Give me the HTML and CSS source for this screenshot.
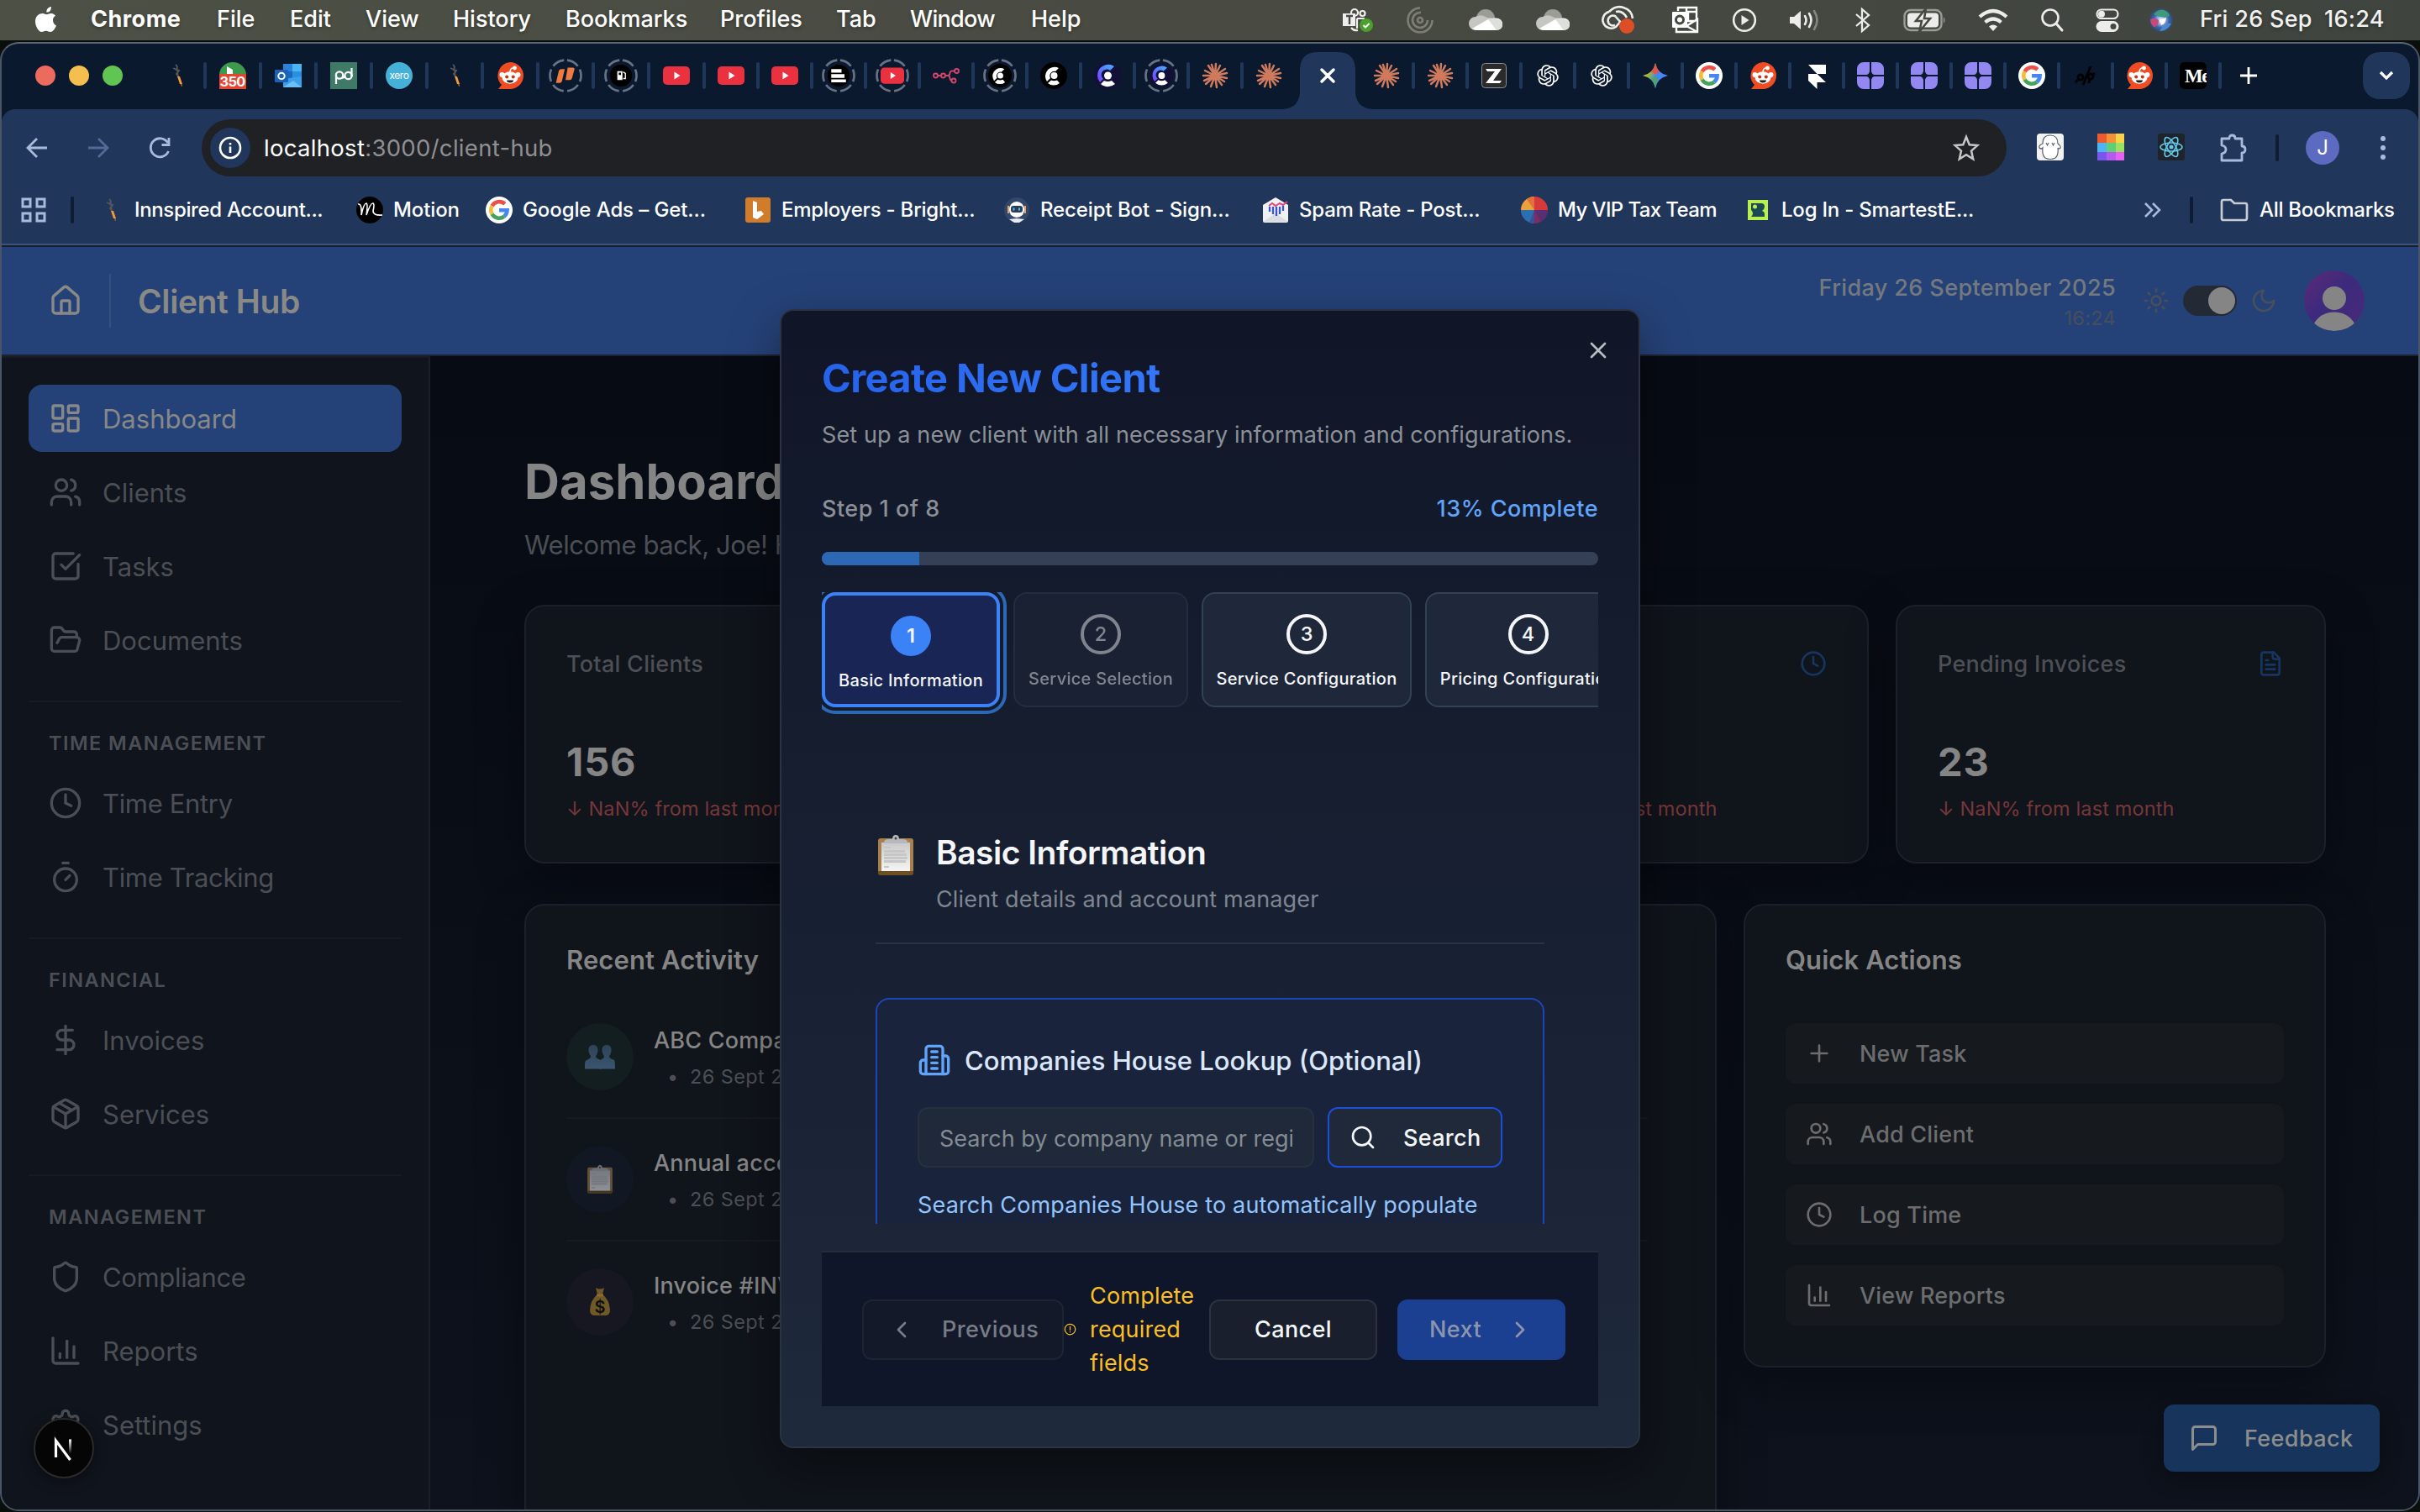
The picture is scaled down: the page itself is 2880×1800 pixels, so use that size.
FILE: index.html
```html
<!DOCTYPE html>
<html lang="en">
<head>
<meta charset="utf-8">
<title>Client Hub</title>
<link rel="stylesheet" href="styles.css">
</head>
<body>
<svg class="defs" width="0" height="0">
<defs>
<linearGradient id="gemini-g" x1="0" y1="0.2" x2="1" y2="0.7"><stop offset="0" stop-color="#f6c042"/><stop offset=".35" stop-color="#8ab04e"/><stop offset=".55" stop-color="#4285f4"/><stop offset="1" stop-color="#4a8cf7"/></linearGradient>
<linearGradient id="clerk-g" x1="0" y1="1" x2="1" y2="0"><stop offset="0" stop-color="#7a3cff"/><stop offset="1" stop-color="#3fb6ff"/></linearGradient>
<linearGradient id="paper-g" x1="0" y1="0" x2="0" y2="1"><stop offset="0" stop-color="#c9c9cb"/><stop offset="1" stop-color="#f5f5f5"/></linearGradient>
<linearGradient id="bust-g" x1="0" y1="0" x2="0" y2="1"><stop offset="0" stop-color="#2e4357"/><stop offset="1" stop-color="#3b5570"/></linearGradient>
<linearGradient id="next-g" x1="0" y1="0" x2="0" y2="1"><stop offset="0" stop-color="#fff"/><stop offset="1" stop-color="#fff" stop-opacity="0"/></linearGradient>
<radialGradient id="siri-g"><stop offset="0" stop-color="#fff"/><stop offset=".3" stop-color="#9fb8e8"/><stop offset=".65" stop-color="#3b62b0"/><stop offset="1" stop-color="#314a66"/></radialGradient>
</defs>

<symbol id="home" viewBox="0 0 24 24"><path d="M15 21v-8a1 1 0 0 0-1-1h-4a1 1 0 0 0-1 1v8"/><path d="M3 10a2 2 0 0 1 .709-1.528l7-5.999a2 2 0 0 1 2.582 0l7 5.999A2 2 0 0 1 21 10v9a2 2 0 0 1-2 2H5a2 2 0 0 1-2-2z"/></symbol>
<symbol id="dash" viewBox="0 0 24 24"><rect x="3" y="3" width="7" height="9" rx="1"/><rect x="14" y="3" width="7" height="5" rx="1"/><rect x="14" y="12" width="7" height="9" rx="1"/><rect x="3" y="16" width="7" height="5" rx="1"/></symbol>
<symbol id="users" viewBox="0 0 24 24"><path d="M16 21v-2a4 4 0 0 0-4-4H6a4 4 0 0 0-4 4v2"/><circle cx="9" cy="7" r="4"/><path d="M22 21v-2a4 4 0 0 0-3-3.87"/><path d="M16 3.13a4 4 0 0 1 0 7.75"/></symbol>
<symbol id="check" viewBox="0 0 24 24"><path d="M21 10.5V19a2 2 0 0 1-2 2H5a2 2 0 0 1-2-2V5a2 2 0 0 1 2-2h12.5"/><path d="m9 11 3 3L22 4"/></symbol>
<symbol id="folder-open" viewBox="0 0 24 24"><path d="m6 14 1.5-2.9A2 2 0 0 1 9.24 10H20a2 2 0 0 1 1.94 2.5l-1.54 6a2 2 0 0 1-1.95 1.5H4a2 2 0 0 1-2-2V5a2 2 0 0 1 2-2h3.9a2 2 0 0 1 1.69.9l.81 1.2a2 2 0 0 0 1.67.9H18a2 2 0 0 1 2 2v2"/></symbol>
<symbol id="clock" viewBox="0 0 24 24"><circle cx="12" cy="12" r="10"/><path d="M12 6v6l4 2"/></symbol>
<symbol id="timer" viewBox="0 0 24 24"><path d="M10 2h4"/><path d="m12 14 3-3"/><circle cx="12" cy="14" r="8"/></symbol>
<symbol id="dollar" viewBox="0 0 24 24"><path d="M12 2v20"/><path d="M17 5H9.5a3.5 3.5 0 0 0 0 7h5a3.5 3.5 0 0 1 0 7H6"/></symbol>
<symbol id="package" viewBox="0 0 24 24"><path d="M11 21.73a2 2 0 0 0 2 0l7-4A2 2 0 0 0 21 16V8a2 2 0 0 0-1-1.73l-7-4a2 2 0 0 0-2 0l-7 4A2 2 0 0 0 3 8v8a2 2 0 0 0 1 1.73z"/><path d="M12 22V12"/><path d="m3.3 7 8.7 5 8.7-5"/><path d="m7.5 4.27 9 5.15"/></symbol>
<symbol id="shield" viewBox="0 0 24 24"><path d="M20 13c0 5-3.5 7.5-7.66 8.95a1 1 0 0 1-.67-.01C7.5 20.5 4 18 4 13V6a1 1 0 0 1 1-1c2 0 4.5-1.2 6.24-2.72a1.17 1.17 0 0 1 1.52 0C14.51 3.81 17 5 19 5a1 1 0 0 1 1 1z"/></symbol>
<symbol id="chart" viewBox="0 0 24 24"><path d="M3 3v16a2 2 0 0 0 2 2h16"/><path d="M18 17V9"/><path d="M13 17V5"/><path d="M8 17v-3"/></symbol>
<symbol id="gear" viewBox="0 0 24 24"><path d="M12.22 2h-.44a2 2 0 0 0-2 2v.18a2 2 0 0 1-1 1.73l-.43.25a2 2 0 0 1-2 0l-.15-.08a2 2 0 0 0-2.73.73l-.22.38a2 2 0 0 0 .73 2.73l.15.1a2 2 0 0 1 1 1.72v.51a2 2 0 0 1-1 1.74l-.15.09a2 2 0 0 0-.73 2.73l.22.38a2 2 0 0 0 2.73.73l.15-.08a2 2 0 0 1 2 0l.43.25a2 2 0 0 1 1 1.73V20a2 2 0 0 0 2 2h.44a2 2 0 0 0 2-2v-.18a2 2 0 0 1 1-1.73l.43-.25a2 2 0 0 1 2 0l.15.08a2 2 0 0 0 2.73-.73l.22-.39a2 2 0 0 0-.73-2.73l-.15-.08a2 2 0 0 1-1-1.74v-.5a2 2 0 0 1 1-1.74l.15-.09a2 2 0 0 0 .73-2.73l-.22-.38a2 2 0 0 0-2.73-.73l-.15.08a2 2 0 0 1-2 0l-.43-.25a2 2 0 0 1-1-1.73V4a2 2 0 0 0-2-2z"/><circle cx="12" cy="12" r="3"/></symbol>
<symbol id="file" viewBox="0 0 24 24"><path d="M15 2H6a2 2 0 0 0-2 2v16a2 2 0 0 0 2 2h12a2 2 0 0 0 2-2V7Z"/><path d="M14 2v4a2 2 0 0 0 2 2h4"/><path d="M10 9H8M16 13H8M16 17H8"/></symbol>
<symbol id="message" viewBox="0 0 24 24"><path d="M21 15a2 2 0 0 1-2 2H7l-4 4V5a2 2 0 0 1 2-2h14a2 2 0 0 1 2 2z"/></symbol>
<symbol id="building" viewBox="0 0 24 24"><path d="M6 22V4a2 2 0 0 1 2-2h8a2 2 0 0 1 2 2v18Z"/><path d="M6 12H4a2 2 0 0 0-2 2v6a2 2 0 0 0 2 2h2"/><path d="M18 9h2a2 2 0 0 1 2 2v9a2 2 0 0 1-2 2h-2"/><path d="M10 6h4M10 10h4M10 14h4M10 18h4"/></symbol>
<symbol id="search" viewBox="0 0 24 24"><circle cx="11" cy="11" r="8"/><path d="m21 21-4.3-4.3"/></symbol>
<symbol id="sun" viewBox="0 0 24 24"><circle cx="12" cy="12" r="4"/><path d="M12 2v2M12 20v2M4.93 4.93l1.41 1.41M17.66 17.66l1.41 1.41M2 12h2M20 12h2M6.34 17.66l-1.41 1.41M19.07 4.93l-1.41 1.41"/></symbol>
<symbol id="moon" viewBox="0 0 24 24"><path d="M12 3a6 6 0 0 0 9 9 9 9 0 1 1-9-9Z"/></symbol>
<symbol id="plus" viewBox="0 0 24 24"><path d="M5 12h14M12 5v14"/></symbol>
<symbol id="x" viewBox="0 0 24 24"><path d="M18 6 6 18M6 6l12 12"/></symbol>
<symbol id="left" viewBox="0 0 24 24"><path d="m15 18-6-6 6-6"/></symbol>
<symbol id="right" viewBox="0 0 24 24"><path d="m9 18 6-6-6-6"/></symbol>
<symbol id="alert" viewBox="0 0 24 24"><circle cx="12" cy="12" r="10"/><path d="M12 7v6M12 16.5v.5"/></symbol>

<symbol id="feather" viewBox="0 0 32 32"><path d="M14 3q3 2 1 6l3 1-3 4 3 4" fill="none" stroke="#54565a" stroke-width="2"/><path d="m16 9 1 8M11 7l4 2" stroke="#54565a" stroke-width="1.500"/><path d="M16 17h3l3 9h-3z" fill="#f39a3b"/><path d="m19.500 26 2.500 0 0 3-1 0z" fill="#8a5a2c"/></symbol>
<symbol id="outlook" viewBox="0 0 32 32"><path d="M10 2h22v24H10z" fill="#1769bd"/><path d="M21 2h11v9H21z" fill="#4ab5f0"/><path d="M10 2h11v9H10z" fill="#2a83d8"/><path d="M21 11h11v8H21z" fill="#2b8fe0"/><path d="m10 20 22-3v13H10z" fill="#3c9fe8"/><path d="m10 30 12-8 10 8z" fill="#6bc1f7"/><rect y="9" width="16" height="15" rx="1" fill="#1a63b8"/><circle cx="8" cy="16.500" r="3.700" fill="none" stroke="#fff" stroke-width="2"/></symbol>
<symbol id="pd" viewBox="0 0 32 32"><path d="M0 0h32v32H0z" fill="#3f7a66"/><g fill="none" stroke="#fff" stroke-width="2.200"><path d="M7 26V15"/><circle cx="11" cy="15.500" r="4.200"/><path d="M14 19q3-1 4-3"/><circle cx="21.500" cy="16" r="4.200"/><path d="M25.500 17V7"/></g></symbol>
<symbol id="reddit" viewBox="0 0 32 32"><path d="M16 0a16 16 0 1 1 0 32H2l4-5A16 16 0 0 1 16 0z" fill="#ee4c23"/><ellipse cx="16" cy="18.500" rx="9.500" ry="7.200" fill="#fff"/><circle cx="6.500" cy="15" r="3" fill="#fff"/><circle cx="25.500" cy="15" r="3" fill="#fff"/><circle cx="21.500" cy="7" r="2.400" fill="#fff"/><path d="M16 12c0-4 1.500-5 4-5" fill="none" stroke="#fff" stroke-width="1.500"/><circle cx="12.200" cy="17.500" r="2" fill="#c73410"/><circle cx="19.800" cy="17.500" r="2" fill="#c73410"/><path d="M12 21.500h8a4 3 0 0 1-8 0z" fill="#222"/></symbol>
<symbol id="yt" viewBox="0 0 32 32"><rect y="5" width="32" height="22" rx="5" fill="#ea3140"/><path d="M13.500 11.500v9l7-4.500z" fill="#fff"/></symbol>
<symbol id="dots" viewBox="0 0 40 40"><circle cx="20" cy="20" r="18.500" fill="none" stroke="#677384" stroke-width="2.700" stroke-dasharray="14.900 4.470" transform="rotate(-84 20 20)"/></symbol>
<symbol id="motion-o" viewBox="0 0 32 32"><g fill="#ef7b3f"><path d="M7 9q1-2 3-2h5l-4 17q-1 2-3 2H3z"/><path d="M19 5h7q3 0 2 3l-3 11q-1 3-3 3h-6z"/></g></symbol>
<symbol id="fuel" viewBox="0 0 32 32"><circle cx="16" cy="16" r="15" fill="#000"/><path d="M11 10h7v12h-7z" fill="#fff"/><path d="M13 12h3v3h-3z" fill="#000"/><path d="m19 11 3 2v7h-3" fill="none" stroke="#fff" stroke-width="1.500"/></symbol>
<symbol id="lines" viewBox="0 0 32 32"><circle cx="16" cy="16" r="15" fill="#000"/><path d="M6 7h14v5H6zM6 14h18v5H6zM6 21h20v4H6z" fill="#fff"/></symbol>
<symbol id="n8n" viewBox="0 0 32 32"><g fill="none" stroke="#d0476b" stroke-width="1.900"><circle cx="3.500" cy="16" r="2.500"/><circle cx="12.500" cy="16" r="2.500"/><circle cx="28.500" cy="10.500" r="2.500"/><circle cx="25" cy="22" r="2.500"/><path d="M6 16h4M15 16h3q2 0 2.500-3t3-2.500H26M18 16q2 0 2.500 3t2 3"/></g></symbol>
<symbol id="clerk" viewBox="0 0 32 32"><circle cx="16" cy="16" r="16" fill="#000"/><path d="M22 7a11 11 0 0 0-16 9 11 11 0 0 0 2 7l4-4a5.500 5.500 0 0 1 6-8z" fill="#fff"/><circle cx="16.500" cy="16" r="4" fill="#fff"/><path d="m9 25 4-3.500q3 1.500 7 0l3 3.500a11 11 0 0 1-14 0z" fill="#fff"/></symbol>
<symbol id="clerk2" viewBox="0 0 32 32"><circle cx="16" cy="16" r="16" fill="#131038"/><path d="M24 5a13 13 0 0 0-20 11 13 13 0 0 0 3 8l4-4a6 6 0 0 1 8-10z" fill="url(#clerk-g)"/><circle cx="16.500" cy="16" r="4.500" fill="#fff"/><path d="m8 26 4-4q4 2 9 0l4 4a13 13 0 0 1-17 0z" fill="#fff"/></symbol>
<symbol id="claude" viewBox="0 0 32 32"><g stroke="#d07a5d" stroke-width="2.500" stroke-linecap="round"><path d="M16 16 17 2M16 16l6-12M16 16 28 8M16 16l14-3M16 16l14 3M16 16l11 7M16 16l8 11M16 16l2 14M16 16l-5 13M16 16 5 26M16 16 3 22M16 16 2 16M16 16 4 10M16 16 8 4M16 16 12 3"/></g></symbol>
<symbol id="zed" viewBox="0 0 32 32"><rect x="1.500" y="1.500" width="29" height="29" rx="4" fill="#2b2b2b" stroke="#8d8f92"/><path d="M6 8h19l-10 14h10l-2 3H6L17 11H8z" fill="#fff"/></symbol>
<symbol id="gpt" viewBox="-3 -3 30 30"><path fill="#fff" d="M22.2819 9.8211a5.9847 5.9847 0 0 0-.5157-4.9108 6.0462 6.0462 0 0 0-6.5098-2.9A6.0651 6.0651 0 0 0 4.9807 4.1818a5.9847 5.9847 0 0 0-3.9977 2.9 6.0462 6.0462 0 0 0 .7427 7.0966 5.98 5.98 0 0 0 .511 4.9107 6.051 6.051 0 0 0 6.5146 2.9001A5.9847 5.9847 0 0 0 13.2599 24a6.0557 6.0557 0 0 0 5.7718-4.2058 5.9894 5.9894 0 0 0 3.9977-2.9001 6.0557 6.0557 0 0 0-.7475-7.0729zm-9.022 12.6081a4.4755 4.4755 0 0 1-2.8764-1.0408l.1419-.0804 4.7783-2.7582a.7948.7948 0 0 0 .3927-.6813v-6.7369l2.02 1.1686a.071.071 0 0 1 .038.0615v5.5826a4.504 4.504 0 0 1-4.4945 4.4944zm-9.6607-4.1254a4.4708 4.4708 0 0 1-.5346-3.0137l.142.0852 4.783 2.7582a.7712.7712 0 0 0 .7806 0l5.8428-3.3685v2.3324a.0804.0804 0 0 1-.0332.0615L9.74 19.9502a4.4992 4.4992 0 0 1-6.1408-1.6464zM2.3408 7.8956a4.485 4.485 0 0 1 2.3655-1.9728V11.6a.7664.7664 0 0 0 .3879.6765l5.8144 3.3543-2.0201 1.1685a.0757.0757 0 0 1-.071 0l-4.8303-2.7865A4.504 4.504 0 0 1 2.3408 7.872zm16.5963 3.8558L13.1038 8.364 15.1192 7.2a.0757.0757 0 0 1 .071 0l4.8303 2.7913a4.4944 4.4944 0 0 1-.6765 8.1042v-5.6772a.79.79 0 0 0-.407-.667zm2.0107-3.0231l-.142-.0852-4.7735-2.7818a.7759.7759 0 0 0-.7854 0L9.409 9.2297V6.8974a.0662.0662 0 0 1 .0284-.0615l4.8303-2.7866a4.4992 4.4992 0 0 1 6.6802 4.66zM8.3065 12.863l-2.02-1.1638a.0804.0804 0 0 1-.038-.0567V6.0742a4.4992 4.4992 0 0 1 7.3757-3.4537l-.142.0805L8.704 5.459a.7948.7948 0 0 0-.3927.6813zm1.0976-2.3654l2.602-1.4998 2.6069 1.4998v2.9994l-2.5974 1.4997-2.6067-1.4997Z"/></symbol>
<symbol id="gemini" viewBox="0 0 32 32"><path d="M16 1q2.500 12.500 15 15-12.500 2.500-15 15-2.500-12.500-15-15 12.500-2.500 15-15z" fill="url(#gemini-g)"/><path d="M16 1q1.500 7 5 10.500l-5 3-5-3q3.500-3.500 5-10.500z" fill="#e5544a"/><path d="M11 20.500 16 17l3 4q-2 4-3 10-1.500-7-5-10.500z" fill="#4aa567"/></symbol>
<symbol id="google" viewBox="0 0 32 32"><circle cx="16" cy="16" r="16" fill="#fff"/><g fill="none" stroke-width="4.600"><path d="M22.800 8.800A9.700 9.700 0 0 0 7.600 11.200" stroke="#ea5148"/><path d="M7.600 11.200a9.700 9.700 0 0 0 0 9.600" stroke="#f5bd35"/><path d="M7.600 20.800a9.700 9.700 0 0 0 14.400 2.800" stroke="#43a35a"/><path d="M22 23.600a9.700 9.700 0 0 0 3.600-7.400H16" stroke="#4687ee"/></g></symbol>
<symbol id="framer" viewBox="0 0 32 32"><path d="M6 3h21v11H16.500zM6 14h10.500L27 24H16.500v8L6 22z" fill="#fff"/></symbol>
<symbol id="quad" viewBox="0 0 32 32"><path d="M8 0h7v11q-1 4-4 4H0V8a8 8 0 0 1 8-8zM17 0h7a8 8 0 0 1 8 8v7H21q-3 0-4-4zM0 17h11q3 0 4 4v11H8a8 8 0 0 1-8-8zM21 17h11v7a8 8 0 0 1-8 8h-7V21q1-4 4-4z" fill="#9387f2"/></symbol>
<symbol id="graph" viewBox="0 0 32 32"><g fill="none" stroke="#020305" stroke-width="3"><circle cx="10" cy="18" r="3"/><circle cx="22" cy="17" r="3"/><path d="m4 24 4-4M13 27 22 5M21 20l-1 5M24 15l3-2"/></g></symbol>
<symbol id="ghost" viewBox="0 0 32 32"><rect width="32" height="32" rx="4" fill="#f2f2f3"/><path d="M7 12q0-10 9-10t9 10q4 3 3 5-2 2-3 0 1 9-3 12-6 3-12 0-4-3-3-12-2 2-4 0-1-3 4-5z" fill="#fff" stroke="#5b5f6b" stroke-width="1.200"/><path d="m11 11 1.500 3 1.500-3M18 11l1.500 3 1.500-3" fill="none" stroke="#5b5f6b" stroke-width="1.100"/></symbol>
<symbol id="mosaic" viewBox="0 0 32 32"><path d="M0 0h11v11H0z" fill="#ee5a30"/><path d="M11 0h11v11H11z" fill="#f39335"/><path d="M22 0h10v11H22z" fill="#f8d548"/><path d="M0 11h11v11H0z" fill="#4db6f2"/><path d="M11 11h11v11H11z" fill="#5fce78"/><path d="M22 11h10v11H22z" fill="#9ae063"/><path d="M0 22h11v10H0z" fill="#7a55ee"/><path d="M11 22h11v10H11z" fill="#b45af0"/><path d="M22 22h10v10H22z" fill="#e860f0"/></symbol>
<symbol id="react" viewBox="0 0 32 32"><rect width="32" height="32" rx="3" fill="#20232a"/><g fill="none" stroke="#61c9ea" stroke-width="1.600"><ellipse cx="16" cy="16" rx="13" ry="5"/><ellipse cx="16" cy="16" rx="13" ry="5" transform="rotate(60 16 16)"/><ellipse cx="16" cy="16" rx="13" ry="5" transform="rotate(120 16 16)"/></g><circle cx="16" cy="16" r="2.500" fill="#61c9ea"/></symbol>
<symbol id="clip" viewBox="0 0 48 48"><path d="M3 7q0-3 3-3h36q3 0 3 3v38q0 2-3 2H6q-3 0-3-2z" fill="#a8804a"/><path d="M3 43h42v2q0 3-3 3H6q-3 0-3-3z" fill="#6f4f22"/><path d="M7 9h34v34H7z" fill="url(#paper-g)"/><path d="M10 14h8v2h-8zM10 18h25v3H10zM10 22h27v3H10zM10 26h28v3H10zM10 30h26v3H10zM10 37h6v2h-6z" fill="#c7c7c7"/><path d="M10 9q0-4 6-4h4q0-5 4-5t4 5h4q6 0 6 4v1H10z" fill="#b5b9bf"/><circle cx="24" cy="4" r="1.500" fill="#444"/></symbol>
<symbol id="busts" viewBox="0 0 36 30"><path d="M10 1c4 0 6 3 5.500 7-.3 3-1.500 5-2.500 6 0 2 1 3 5 4.500 2 1 2.500 3 2 11H0c0-7 0-9 2-10.500 4-1.500 5-3 5-5-1-1-2.300-3-2.500-6C4 4 6 1 10 1z" fill="url(#bust-g)"/><path d="M26 1c4 0 6 3 5.500 7-.3 3-1.500 5-2.500 6 0 2 1 3 5 4.500 2 1 2 3 2 11H17c0-7 0-9 1-10.500 4-1.500 5-3 5-5-1-1-2.300-3-2.500-6C20 4 22 1 26 1z" fill="url(#bust-g)"/></symbol>
<symbol id="cloud" viewBox="0 0 40 28"><circle cx="20" cy="12" r="11" fill="#9b9c98"/><path d="M8 26a8 8 0 0 1 0-16q6-4 14 1l10 1a8 8 0 0 1 0 14z" fill="#c6c7c3"/><path d="m4 24 19-11q17-5 17 6 0 7-8 7H8z" fill="#fff"/><path d="m23 13 10 13q7-1 7-7-1-9-17-6z" fill="#dedfdd"/></symbol>
</svg>

<div class="desktop">
<header class="menubar">
  <nav class="menus">
    <svg width="27" height="32" viewBox="0 0 27 32"><path fill="#fff" d="M22 17c0-3.500 2.800-5 3-5.200-1.700-2.400-4.200-2.800-5.100-2.800-2.200-.2-4.300 1.300-5.400 1.300S11.700 9 9.900 9C4 9 1 13.600 1 18.500 1 24 4.800 31 8.400 31c1.900 0 3-1.300 5.300-1.300 2.300 0 3.200 1.300 5.300 1.300 3.500 0 6.500-6 7-7.600C24 22.500 22 20.500 22 17zM18.500 6c1-1.200 1.700-3.200 1.500-5-2.500.1-5.700 2.200-5.700 6.500 1.700.2 3.300-.4 4.200-1.500z"/></svg>
    <b>Chrome</b><span>File</span><span>Edit</span><span>View</span><span>History</span><span>Bookmarks</span><span>Profiles</span><span>Tab</span><span class="tight">Window</span><span>Help</span>
  </nav>
  <div class="status">
    <svg width="38" height="30" viewBox="0 0 38 30"><g fill="none" stroke="#eeeeec" stroke-width="2.200"><circle cx="15" cy="6" r="4"/><circle cx="24.500" cy="7" r="3"/><path d="M18 13h9M11 24q3 4 8 3M18 13v12"/></g><path d="M1 7h15v15H1z" fill="#eeeeec"/><path d="M5 10h8M9 10v10" stroke="#4a4c44" stroke-width="2.400"/><circle cx="29" cy="21" r="8" fill="#4aa02c"/><path d="m25.500 21 2.500 2.500 4.500-4.500" stroke="#fff" stroke-width="2" fill="none"/></svg>
    <svg width="32" height="32" viewBox="0 0 32 32"><g fill="none" stroke="#7c7e77" stroke-width="2.600"><path d="M16 1.500a14.500 14.500 0 1 0 14.500 14.500"/><path d="M17 7a9 9 0 1 0 8 9"/><circle cx="16" cy="16" r="3"/></g></svg>
    <svg width="40" height="28"><use href="#cloud"/></svg>
    <svg width="40" height="28"><use href="#cloud"/></svg>
    <svg width="42" height="34" viewBox="0 0 42 34"><g fill="none" stroke="#eeeeec" stroke-width="2.600"><path d="M10 7Q18-1 27 2q10 3 11 13M10 7a10 10 0 1 0 8 18l6-7"/><path d="M17 23a6 6 0 1 1 0-11l8 9"/><path d="M18 7q8-2 13 7"/></g><circle cx="31" cy="24" r="9" fill="#dd4e27"/></svg>
    <svg width="34" height="34" viewBox="0 0 34 34"><path d="M8 6V2h22v14M6 25v6h25V16l-13 8 13 7M18 2v5h12M20 8v10h9" fill="none" stroke="#fff" stroke-width="2.400"/><rect x="1" y="7" width="18" height="19" rx="1" fill="#fff"/><circle cx="10" cy="16.500" r="4.500" fill="none" stroke="#45473f" stroke-width="3"/></svg>
    <svg width="30" height="30" viewBox="0 0 30 30"><circle cx="15" cy="15" r="12.800" fill="none" stroke="#ecedeb" stroke-width="2.600"/><path d="M11.500 9v12l9-6z" fill="#ecedeb"/></svg>
    <svg width="40" height="30" viewBox="0 0 40 30"><path d="M2 11h5l8-7v22l-8-7H2z" fill="#ecedeb"/><g fill="none" stroke="#ecedeb" stroke-width="2.600" stroke-linecap="round"><path d="M20 10q3 5 0 10M25 7q5 8 0 16"/><path d="M31 4q7 11 0 22" stroke="#85877f"/></g></svg>
    <svg width="20" height="30" viewBox="0 0 20 30"><path d="m2 8 15 13-8 7V2l8 7L2 22" fill="none" stroke="#ecedeb" stroke-width="2.300"/></svg>
    <svg width="52" height="28" viewBox="0 0 52 28"><rect x="1.500" y="2" width="44" height="24" rx="7" fill="none" stroke="#9a9c96" stroke-width="2.400"/><rect x="5" y="5.500" width="37" height="17" rx="4" fill="#ecedeb"/><path d="M48 10q3 4 0 8z" fill="#9a9c96"/><path d="M27 0 15 15h7l-3 13 13-16h-7z" fill="#ecedeb" stroke="#464941" stroke-width="2.600"/></svg>
    <svg width="36" height="28" viewBox="0 0 36 28"><g fill="none" stroke="#ecedeb" stroke-width="4.200"><path d="M2 10q16-14 32 0M8.500 16.500q9.500-8 19 0"/></g><path d="M13 21.500q5-4 10 0l-5 5.500z" fill="#ecedeb"/></svg>
    <svg width="28" height="30" viewBox="0 0 28 30"><circle cx="12" cy="12" r="9.500" fill="none" stroke="#ecedeb" stroke-width="2.600"/><path d="m19 19 7 8" stroke="#ecedeb" stroke-width="3" stroke-linecap="round"/></svg>
    <svg width="28" height="28" viewBox="0 0 28 28"><rect x="1.500" y="1.500" width="25" height="10.500" rx="5.200" fill="none" stroke="#ecedeb" stroke-width="2.200"/><circle cx="7" cy="6.700" r="4" fill="#ecedeb"/><rect x=".5" y="15" width="27" height="13" rx="6.500" fill="#ecedeb"/><circle cx="21" cy="21.500" r="3.500" fill="#444740"/></svg>
    <svg width="28" height="28" viewBox="0 0 28 28"><circle cx="14" cy="14" r="14" fill="url(#siri-g)"/><path d="M5 7q5-6 12-5 6 2 7 7-8 4-19-2z" fill="#3f9a7c"/><path d="M1 13q6-3 10 1 0 8-6 8-4-4-4-9z" fill="#c44a7a"/><path d="M12 27q9 0 14-9-8-2-14 9z" fill="#4a8bd0"/><path d="m12 14 8-3q-1 8-6 9z" fill="#fff"/></svg>
    <span class="date">Fri 26 Sep</span><span>16:24</span>
  </div>
</header>

<div class="window">
  <div class="tabs">
    <div class="lights"><i class="r"></i><i class="y"></i><i class="g"></i></div>
    <div class="tab w"><svg><use href="#feather"/></svg></div>
    <div class="tab w"><svg viewBox="0 0 32 32"><path d="M0 15a16 15 0 0 1 32 0z" fill="#3c9a4b"/><path d="M9 5v10h7V9z" fill="#fff"/><path d="M0 14h32v18H0z" fill="#e8432f"/><text x="15.500" y="28.500" font-size="16.500" font-weight="700" text-anchor="middle" fill="#fff" letter-spacing="-.8">350</text></svg></div>
    <div class="tab w"><svg><use href="#outlook"/></svg></div>
    <div class="tab w"><svg><use href="#pd"/></svg></div>
    <div class="tab w"><svg viewBox="0 0 32 32"><circle cx="16" cy="16" r="16" fill="#45b1d8"/><text x="16" y="19.500" font-size="12" text-anchor="middle" fill="#fff" letter-spacing="-.4">xero</text></svg></div>
    <div class="tab w"><svg><use href="#feather"/></svg></div>
    <div class="tab w"><svg><use href="#reddit"/></svg></div>
    <div class="tab w ring"><svg class="dashes"><use href="#dots"/></svg><svg><use href="#motion-o"/></svg></div>
    <div class="tab w ring"><svg class="dashes"><use href="#dots"/></svg><svg><use href="#fuel"/></svg></div>
    <div class="tab w"><svg><use href="#yt"/></svg></div>
    <div class="tab"><svg><use href="#yt"/></svg></div>
    <div class="tab"><svg><use href="#yt"/></svg></div>
    <div class="tab ring"><svg class="dashes"><use href="#dots"/></svg><svg><use href="#lines"/></svg></div>
    <div class="tab ring"><svg class="dashes"><use href="#dots"/></svg><svg><use href="#yt"/></svg></div>
    <div class="tab"><svg><use href="#n8n"/></svg></div>
    <div class="tab ring"><svg class="dashes"><use href="#dots"/></svg><svg><use href="#clerk"/></svg></div>
    <div class="tab"><svg><use href="#clerk"/></svg></div>
    <div class="tab"><svg><use href="#clerk2"/></svg></div>
    <div class="tab ring"><svg class="dashes"><use href="#dots"/></svg><svg><use href="#clerk2"/></svg></div>
    <div class="tab"><svg><use href="#claude"/></svg></div>
    <div class="tab nosep"><svg><use href="#claude"/></svg></div>
    <div class="tab active"><svg class="shape" viewBox="0 0 106 68"><path fill="#20365a" d="M0 68q20-2 20-22V20Q21 0 41 0h24q20 0 21 20v26q0 20 20 22z"/></svg><svg class="ln close" viewBox="0 0 24 24"><use href="#x"/></svg></div>
    <div class="tab"><svg><use href="#claude"/></svg></div>
    <div class="tab"><svg><use href="#claude"/></svg></div>
    <div class="tab"><svg><use href="#zed"/></svg></div>
    <div class="tab"><svg><use href="#gpt"/></svg></div>
    <div class="tab"><svg><use href="#gpt"/></svg></div>
    <div class="tab"><svg><use href="#gemini"/></svg></div>
    <div class="tab"><svg><use href="#google"/></svg></div>
    <div class="tab"><svg><use href="#reddit"/></svg></div>
    <div class="tab"><svg><use href="#framer"/></svg></div>
    <div class="tab"><svg><use href="#quad"/></svg></div>
    <div class="tab"><svg><use href="#quad"/></svg></div>
    <div class="tab"><svg><use href="#quad"/></svg></div>
    <div class="tab"><svg><use href="#google"/></svg></div>
    <div class="tab"><svg><use href="#graph"/></svg></div>
    <div class="tab"><svg><use href="#reddit"/></svg></div>
    <div class="tab"><svg class="clipped" viewBox="0 0 32 32"><rect width="32" height="32" rx="5" fill="#000"/><text x="6" y="24" class="serif" font-size="23" font-weight="700" fill="#fff" letter-spacing="-1.500">Me</text></svg></div>
    <div class="newtab"><svg width="24" height="24" viewBox="0 0 24 24"><path d="M2 12h20M12 2v20" stroke="#fff" stroke-width="2.800"/></svg></div>
    <div class="tabmenu"><svg width="18" height="12" viewBox="0 0 18 12"><path d="m2 2 7 7 7-7" fill="none" stroke="#fff" stroke-width="3.200"/></svg></div>
  </div>

  <div class="toolbar">
    <div class="omni-row">
      <div class="navs">
        <svg width="28" height="28" viewBox="0 0 28 28"><path d="M26 14H3M14 3 3 14l11 11" fill="none" stroke="#a9bbdc" stroke-width="2.800"/></svg>
        <svg width="28" height="28" viewBox="0 0 28 28"><path d="M2 14h23M14 3l11 11-11 11" fill="none" stroke="#546a94" stroke-width="2.800"/></svg>
        <svg width="28" height="28" viewBox="0 0 28 28"><path d="M24.500 18a11 11 0 1 1-.8-10M25 2v8.500h-8.500" fill="none" stroke="#a9bbdc" stroke-width="2.800"/></svg>
      </div>
      <div class="omni">
        <span class="info"><svg width="28" height="28" viewBox="0 0 28 28"><circle cx="14" cy="14" r="12" fill="none" stroke="#fff" stroke-width="2.600"/><path d="M14 12.500V20M14 8v2.500" stroke="#fff" stroke-width="2.600"/></svg></span>
        <span class="url">localhost<em>:3000/client-hub</em></span>
        <svg class="star" width="34" height="32" viewBox="0 0 34 32"><path d="m17 3 3.700 9.300 9.600.8-7.300 6.500 2.200 9.700L17 24.200l-8.200 5.100 2.200-9.700-7.300-6.500 9.600-.8z" fill="none" stroke="#c7c7c7" stroke-width="2.500"/></svg>
      </div>
      <div class="exts">
        <svg><use href="#ghost"/></svg>
        <svg><use href="#mosaic"/></svg>
        <svg><use href="#react"/></svg>
        <svg viewBox="0 0 32 34" class="puzzle"><path d="M2 6h9q0-4 3.500-4T18 6h8v9q4 0 4 4t-4 4v9H2v-8q5-1 5-5t-5-5z" fill="none" stroke="#a9bbdc" stroke-width="2.800" stroke-linejoin="round"/></svg>
      </div>
      <i class="vsep"></i>
      <span class="profile">J</span>
      <svg class="kebab" width="8" height="30" viewBox="0 0 8 30"><g fill="#a9bbdc"><circle cx="4" cy="4" r="3"/><circle cx="4" cy="15" r="3"/><circle cx="4" cy="26" r="3"/></g></svg>
    </div>
    <div class="marks">
      <svg class="apps" width="30" height="30" viewBox="0 0 30 30"><g fill="none" stroke="#a9bbdc" stroke-width="3"><path d="M2 2h9v9H2zM19 2h9v9h-9zM2 19h9v9H2zM19 19h9v9h-9z"/></g></svg>
      <i class="vsep"></i>
      <div class="mark"><svg><use href="#feather"/></svg><span class="t1">Innspired Account...</span></div>
      <div class="mark s"><svg viewBox="0 0 32 32"><circle cx="16" cy="16" r="16" fill="#000"/><path d="M2 9q5-1 4 13Q9 8 12 8q2 1 0 14Q17 7 20 8q2 1 0 9 0 6 11 5" fill="none" stroke="#fff" stroke-width="1.600"/></svg><span>Motion</span></div>
      <div class="mark"><svg><use href="#google"/></svg><span>Google Ads – Get...</span></div>
      <div class="mark"><svg viewBox="0 0 32 32"><rect x="1" y="1" width="30" height="30" rx="3" fill="#d07c2b"/><path d="M10 5v20l5 2 8-6-3-4-5 1V7z" fill="#fff"/></svg><span class="t3">Employers - Bright...</span></div>
      <div class="mark"><svg viewBox="0 0 32 32"><circle cx="16" cy="16" r="15" fill="#33476b"/><path d="M6 11v9M26 11v9" stroke="#e9a15f" stroke-width="2"/><rect x="7" y="6" width="18" height="19" rx="9" fill="#fff"/><rect x="9" y="11" width="14" height="8" rx="3" fill="#2b3d5c"/><path d="M12.500 13.500v3M19 13.500v3" stroke="#4fc3e8" stroke-width="2"/><path d="m7 27 9-1 9 1-6 4h-6z" fill="#e8ecf2"/></svg><span>Receipt Bot - Sign...</span></div>
      <div class="mark"><svg viewBox="0 0 32 32"><path d="M1 10 16 1l15 9v19q0 2-2 2H3q-2 0-2-2z" fill="#f1f1f3"/><path d="m1 30 15-10 15 10z" fill="#dcdde1"/><path d="M9 12v6M13 12v9M17 12v11M21 12v9M25 11v6" stroke="#3a55c4" stroke-width="2.300"/><path d="m8 11 4-3 4 3 5-3 4 2 5-4" fill="none" stroke="#e0457b" stroke-width="2"/></svg><span class="t3">Spam Rate - Post...</span></div>
      <div class="mark v"><svg viewBox="0 0 32 32"><circle cx="16" cy="16" r="16" fill="#7a2d63"/><path d="M16 16V0A16 16 0 0 0 0 16z" fill="#eaa23c"/><path d="M16 16V0a16 16 0 0 0-9 3z" fill="#e2703a"/><path d="M16 16V0a16 16 0 0 1 16 16z" fill="#d63a3a"/><path d="M16 16v16A16 16 0 0 1 0 16z" fill="#2b6fb0"/><path d="m16 16-6 15q3 1 6 1z" fill="#3c4f9a"/><path d="m16 16 8 14q8-5 8-14z" fill="#5b2d73"/></svg><span class="t2">My VIP Tax Team</span></div>
      <div class="mark g"><svg viewBox="0 0 32 32"><path d="M4 4h24v24H4z" fill="#b9f04f"/><path d="M8 8h12q4 0 4 4 0 3-3 5 3 1 3 4v3H8q4-4 0-8z" fill="#1c4a52"/><circle cx="12.500" cy="12" r="2.500" fill="#b9f04f"/></svg><span class="t3">Log In - SmartestE...</span></div>
      <div class="marks-end">
        <svg width="22" height="20" viewBox="0 0 22 20"><path d="m2 2 8 8-8 8M11 2l8 8-8 8" fill="none" stroke="#a9bbdc" stroke-width="2.600"/></svg>
        <i class="vsep"></i>
        <svg width="34" height="28" viewBox="0 0 34 28"><path d="M2 4q0-2 2-2h9l4 4h13q2 0 2 2v15q0 3-2 3H4q-2 0-2-2z" fill="none" stroke="#c7cbd3" stroke-width="2.700"/></svg>
        <span>All Bookmarks</span>
      </div>
    </div>
  </div>

  <div class="apphead">
    <svg class="ln i40"><use href="#home"/></svg>
    <i class="hsep"></i>
    <h2>Client Hub</h2>
    <div class="when"><div class="d">Friday 26 September 2025</div><div class="t">16:24</div></div>
    <svg class="ln i32 sun"><use href="#sun"/></svg>
    <span class="toggle"><i></i></span>
    <svg class="ln i32 moon"><use href="#moon"/></svg>
    <svg class="avatar" viewBox="0 0 72 72"><defs><linearGradient id="av" x1="0" y1="0" x2="1" y2="1"><stop offset="0" stop-color="#5d2a78"/><stop offset=".45" stop-color="#3c2a7c"/><stop offset="1" stop-color="#4a2a7a"/></linearGradient><clipPath id="avc"><circle cx="36" cy="36" r="36"/></clipPath></defs><g clip-path="url(#avc)"><path d="M0 0h72v72H0z" fill="url(#av)"/><circle cx="36" cy="33" r="14" fill="#858585"/><ellipse cx="36" cy="74" rx="27" ry="24.500" fill="#858585"/></g></svg>
  </div>

  <div class="app">
    <aside class="side">
      <section>
        <a class="on"><svg class="ln i40"><use href="#dash"/></svg>Dashboard</a>
        <a><svg class="ln i40"><use href="#users"/></svg>Clients</a>
        <a><svg class="ln i40"><use href="#check"/></svg>Tasks</a>
        <a><svg class="ln i40"><use href="#folder-open"/></svg>Documents</a>
      </section>
      <section>
        <h4>TIME MANAGEMENT</h4>
        <a class="tt"><svg class="ln i40"><use href="#clock"/></svg>Time Entry</a>
        <a class="tt"><svg class="ln i40"><use href="#timer"/></svg>Time Tracking</a>
      </section>
      <section>
        <h4>FINANCIAL</h4>
        <a><svg class="ln i40"><use href="#dollar"/></svg>Invoices</a>
        <a><svg class="ln i40"><use href="#package"/></svg>Services</a>
      </section>
      <section>
        <h4>MANAGEMENT</h4>
        <a class="tt"><svg class="ln i40"><use href="#shield"/></svg>Compliance</a>
        <a><svg class="ln i40"><use href="#chart"/></svg>Reports</a>
        <a><svg class="ln i40"><use href="#gear"/></svg>Settings</a>
      </section>
    </aside>

    <main>
      <h1>Dashboard</h1>
      <p class="welcome">Welcome back, Joe! Here's what's happening.</p>
      <div class="cards">
        <div class="card"><div class="top"><span>Total Clients</span></div><div class="num">156</div><div class="chg">↓ NaN% from last month</div></div>
        <div class="card"></div>
        <div class="card"><div class="top"><span></span><svg class="ln i32"><use href="#clock"/></svg></div><div class="num">&nbsp;</div><div class="chg">↓ NaN% from last month</div></div>
        <div class="card"><div class="top"><span>Pending Invoices</span><svg class="ln i32"><use href="#file"/></svg></div><div class="num">23</div><div class="chg">↓ NaN% from last month</div></div>
      </div>
      <div class="lower">
        <div class="card recent">
          <h3>Recent Activity</h3>
          <div class="act"><span class="dot c1"><svg width="36" height="30"><use href="#busts"/></svg></span><div><b>ABC Company</b><small><i>•</i>26 Sept 2025</small></div></div>
          <div class="act"><span class="dot c2"><svg class="dim" width="34" height="36"><use href="#clip"/></svg></span><div><b>Annual accounts</b><small><i>•</i>26 Sept 2025</small></div></div>
          <div class="act"><span class="dot c3"><svg width="28" height="36" viewBox="0 0 28 36"><path d="M9 1q5 3 10 0l-2 8q8 6 9 18 0 7-5 7H7q-5 0-5-7 1-12 9-18z" fill="#6f5a27"/><path d="M10 10h8" stroke="#8a6a35" stroke-width="3"/><text x="14" y="31" font-size="20" font-weight="600" text-anchor="middle" fill="#0d0f12">$</text></svg></span><div><b>Invoice #INV</b><small><i>•</i>26 Sept 2025</small></div></div>
        </div>
        <div class="card quick">
          <h3>Quick Actions</h3>
          <a><svg class="ln i32"><use href="#plus"/></svg>New Task</a>
          <a><svg class="ln i32"><use href="#users"/></svg>Add Client</a>
          <a><svg class="ln i32"><use href="#clock"/></svg>Log Time</a>
          <a><svg class="ln i32"><use href="#chart"/></svg>View Reports</a>
        </div>
      </div>
    </main>
  </div>
</div>

<a class="feedback"><svg class="ln"><use href="#message"/></svg>Feedback</a>
<div class="nextjs"><svg width="40" height="40" viewBox="0 0 40 40"><path d="M10.500 31V11l17 23" fill="none" stroke="#fff" stroke-width="3.200"/><rect x="26" y="9.500" width="3" height="17" fill="url(#next-g)"/></svg></div>

<div class="modal">
  <svg class="ln modal-x"><use href="#x"/></svg>
  <h2>Create New Client</h2>
  <p class="desc">Set up a new client with all necessary information and configurations.</p>
  <div class="prog-row"><span>Step 1 of 8</span><span class="pct">13% Complete</span></div>
  <div class="prog"><i style="width:12.5%"></i></div>
  <div class="steps">
    <div class="step cur"><i>1</i>Basic Information</div>
    <div class="step off"><i>2</i>Service Selection</div>
    <div class="step s3"><i>3</i>Service Configuration</div>
    <div class="step s4"><i>4</i>Pricing Configuration</div>
  </div>
  <div class="scroll">
    <div class="sec">
      <svg width="48" height="48"><use href="#clip"/></svg>
      <div><h3>Basic Information</h3><p>Client details and account manager</p></div>
    </div>
    <div class="lookup">
      <h4><svg class="ln i40"><use href="#building"/></svg>Companies House Lookup (Optional)</h4>
      <div class="find">
        <div class="input"><span>Search by company name or registration</span></div>
        <a class="btn-search"><svg class="ln i32"><use href="#search"/></svg>Search</a>
      </div>
      <p>Search Companies House to automatically populate</p>
    </div>
  </div>
  <div class="foot">
    <a class="prev"><svg class="ln i32"><use href="#left"/></svg>Previous</a>
    <div class="warn"><svg class="ln"><use href="#alert"/></svg><span>Complete required fields</span></div>
    <a class="cancel">Cancel</a>
    <a class="next">Next<svg class="ln i32"><use href="#right"/></svg></a>
  </div>
</div>
</div>
</body>
</html>
```
FILE: styles.css
```css
* { box-sizing: border-box; }
body { margin: 0; font-family: Inter, "Liberation Sans", sans-serif; }
h1, h2, h3, h4, p { margin: 0; font-weight: inherit; }
i, em { font-style: normal; }
svg { display: block; flex: none; overflow: visible; }
svg text { font-family: Inter, sans-serif; }
svg text.serif { font-family: "Liberation Serif", serif; }
svg.clipped { overflow: hidden; border-radius: 5px; }
.defs { position: absolute; }
.ln { fill: none; stroke: currentColor; stroke-width: 2; stroke-linecap: round; stroke-linejoin: round; }
.i40 { width: 40px; height: 40px; }
.i32 { width: 32px; height: 32px; }

.desktop { position: relative; width: 2880px; height: 1800px; overflow: hidden; background: #0b0f0b; }

/* menu bar */
.menubar { display: flex; justify-content: space-between; height: 48px; margin-bottom: 2px; background: linear-gradient(90deg, #4d5045, #494b42 50%, #3f443f); color: #fff; font-size: 27px; font-weight: 500; line-height: 44px; text-shadow: 0 2px 4px rgba(0,0,0,.3); }
.menus { display: grid; grid-template-columns: 67px 150px 87px 90px 104px 134px 184px 138px 88px 144px auto; padding-left: 41px; align-items: center; height: 45px; white-space: nowrap; }
.menus b { font-weight: 700; letter-spacing: .5px; }
.menus .tight { letter-spacing: -.7px; }
.status { display: grid; grid-template-columns: 74px 74px 82px 78px 78px 82px 58px 86px 52px 96px 66px 74px 58px 70px 162px 101px; width: 1301px; align-items: center; justify-items: center; height: 48px; color: #f1f1ef; white-space: nowrap; }
.status span { justify-self: start; margin-left: -3px; padding-bottom: 3px; letter-spacing: .3px; }
.status .date { margin-left: 11px; }

/* browser window */
.window { height: 1749px; border: 2px solid #4a5666; border-top-color: #5b6675; border-radius: 22px; overflow: hidden; background: #0b192e; }
.tabs { display: flex; align-items: center; height: 78px; padding-bottom: 2px; }
.lights { display: flex; gap: 16px; width: 176px; padding-left: 40px; }
.lights i { width: 24px; height: 24px; border-radius: 50%; background: #ec6a5e; }
.lights .y { background: #f4bf4f; }
.lights .g { background: #61c554; }
.tab { position: relative; display: flex; justify-content: center; align-items: center; width: 64px; height: 76px; }
.tab.w { width: 66px; }
.tab > svg { width: 32px; height: 32px; }
.tab::after { content: ""; position: absolute; right: -2px; top: 22px; width: 4px; height: 32px; border-radius: 2px; background: #20365a; }
.tab.nosep::after, .tab.active::after { display: none; }
.tab.ring > svg { width: 28px; height: 28px; }
.tab.ring > .dashes { position: absolute; left: calc(50% - 20px); top: 18px; width: 40px; height: 40px; }
.tab.active { width: 76px; }
.tab.active .shape { position: absolute; left: -15px; top: 10px; width: 106px; height: 68px; }
.tab.active .close { position: relative; width: 28px; height: 28px; stroke: #fff; stroke-width: 3; }
.newtab { display: flex; justify-content: center; width: 68px; }
.tabmenu { display: flex; align-items: center; justify-content: center; width: 56px; height: 56px; margin: 0 10px 0 auto; border-radius: 20px; background: #20365a; }

.toolbar { height: 162px; background: #20365a; border-radius: 16px 16px 0 0; border-bottom: 2px solid #3d5377; color: #fff; }
.omni-row { display: flex; align-items: center; height: 92px; padding-left: 28px; }
.navs { display: flex; gap: 45px; width: 210px; }
.omni { display: flex; align-items: center; width: 2148px; height: 68px; padding: 0 31px 0 10px; border-radius: 34px; background: #202124; font-size: 27.5px; letter-spacing: .3px; }
.info { display: grid; place-items: center; width: 48px; height: 48px; margin-right: 16px; border-radius: 50%; background: #20365a; }
.url em { color: #8f9093; }
.star { margin-left: auto; }
.exts { display: flex; gap: 40px; margin-left: 36px; }
.exts svg { width: 32px; height: 32px; }
.exts .puzzle { height: 34px; margin-left: 2px; }
.vsep { width: 4px; height: 32px; border-radius: 2px; background: #0e1d36; }
.omni-row > .vsep { margin-left: 34px; }
.profile { width: 40px; height: 40px; margin-left: 32px; border-radius: 50%; background: #5c6bc0; font-size: 24px; line-height: 40px; text-align: center; }
.kebab { margin-left: 48px; }
.marks { display: flex; align-items: center; height: 55px; padding-left: 23px; font-size: 24px; font-weight: 500; letter-spacing: -.1px; white-space: nowrap; }
.marks .apps { margin-right: 29px; }
.mark { display: flex; align-items: center; gap: 12px; width: 308px; }
.marks > .vsep { margin-right: 28px; }
.mark svg { width: 32px; height: 32px; }
.mark.s { width: 154px; }
.mark.v { width: 266px; }
.mark.g { width: 475px; }
.t1 { letter-spacing: -.35px; }
.t2 { letter-spacing: -.6px; }
.t3 { letter-spacing: -.22px; }
.marks-end { display: flex; align-items: center; letter-spacing: -.3px; }
.marks-end .vsep { margin: 0 32px 0 33px; }
.marks-end span { margin-left: 13px; }

/* application header */
.apphead { display: flex; align-items: center; height: 132px; padding: 0 64px 0 56px; border-top: 2px solid #15202f; border-bottom: 2px solid #1c2330; background: #254278; color: #898986; }
.apphead .hsep { width: 2px; height: 64px; margin: 0 32px; background: #35507f; }
.apphead h2 { font-size: 39px; font-weight: 600; letter-spacing: -.4px; }
.when { margin-left: auto; padding-top: 1px; text-align: right; }
.when .d { font-size: 27px; font-weight: 500; line-height: 40px; color: #74797f; letter-spacing: .38px; }
.when .t { font-size: 23.500px; line-height: 32px; color: #474e5c; letter-spacing: .3px; }
.sun { margin-left: 32px; color: #474e5c; }
.toggle { width: 64px; height: 36px; margin: 0 16px; padding: 2px; border-radius: 18px; background: #232a35; }
.toggle i { display: block; width: 32px; height: 32px; margin-left: 28px; border-radius: 50%; background: #858585; }
.moon { color: #474e5c; }
.avatar { width: 72px; height: 72px; margin-left: 32px; }

/* layout */
.app { display: flex; height: 1376px; }
.side { width: 510px; padding: 32px 32px 0; border-right: 2px solid #1a1f29; border-top: 2px solid #161b24; background: #10141c; color: #4b4f55; }
.side section { display: flex; flex-direction: column; gap: 8px; }
.side section + section { margin-top: 32px; padding-top: 32px; border-top: 2px solid #161a21; }
.side h4 { height: 32px; margin-bottom: 8px; padding-left: 24px; font-size: 23.500px; font-weight: 600; line-height: 34px; letter-spacing: 1.450px; }
.side a { display: flex; align-items: center; gap: 24px; height: 80px; padding-left: 24px; border-radius: 16px; font-size: 31px; }
.side a.tt { letter-spacing: -.34px; }
.side a.on { background: #254278; color: #878887; }
main { flex: 1; padding: 109px 110px 0 112px; background: linear-gradient(180deg, #070b13, #0d121c); color: #858585; }
h1 { font-size: 58px; font-weight: 700; line-height: 80px; letter-spacing: .1px; }
.welcome { margin: 12px 0 47px; font-size: 31px; line-height: 48px; letter-spacing: -.42px; color: #4c4f55; }
.cards { display: grid; grid-template-columns: repeat(4, 512px); gap: 32px; }
.card { border: 2px solid #1b202a; border-radius: 24px; background: #10141b; padding: 48px; box-shadow: 0 16px 56px rgba(0,0,0,.35); }
.cards .card { height: 308px; }
.top { display: flex; justify-content: space-between; align-items: center; height: 40px; font-size: 27px; font-weight: 500; letter-spacing: .27px; color: #4c4f55; }
.top svg { color: #16355f; }
.num { margin-top: 65px; font-size: 47px; font-weight: 700; line-height: 64px; letter-spacing: .9px; }
.chg { margin-top: 8px; font-size: 23.500px; line-height: 32px; letter-spacing: .13px; color: #77373a; white-space: nowrap; }
.lower { display: flex; gap: 32px; margin-top: 48px; align-items: flex-start; }
.card h3 { height: 34px; font-size: 31px; font-weight: 600; line-height: 34px; letter-spacing: .1px; }
.recent { width: 1419px; height: 900px; }
.recent h3 { margin-bottom: 26px; }
.act { display: flex; width: 1287px; height: 144px; padding: 32px 0; gap: 24px; }
.act + .act { height: 146px; border-top: 2px solid #161a20; }
.dot { display: grid; place-items: center; width: 80px; height: 80px; border-radius: 50%; }
.c1 { background: #121e20; }
.c2 { background: #111824; }
.c3 { background: #171722; }
.dot .dim { opacity: .55; }
.act b { display: block; font-size: 27px; font-weight: 500; line-height: 42px; letter-spacing: .2px; }
.act small { display: block; margin-top: 5px; font-size: 23.500px; line-height: 33px; letter-spacing: .4px; color: #4c4f55; }
.act small i { display: inline-block; width: 43px; padding-left: 16px; }
.quick { display: flex; flex-direction: column; gap: 24px; width: 693px; height: 552px; }
.quick h3 { margin-bottom: 34px; }
.quick a { display: flex; align-items: center; gap: 32px; height: 72px; padding-left: 24px; border-radius: 12px; background: #16191d; font-size: 27px; font-weight: 500; letter-spacing: .2px; color: #6c6d6f; }

/* floating widgets */
.feedback { position: absolute; left: 2575px; top: 1672px; display: flex; align-items: center; width: 257px; height: 80px; padding-left: 30px; gap: 30px; border-radius: 12px; background: #17355c; color: #8d8d8d; font-size: 27px; font-weight: 500; letter-spacing: .4px; box-shadow: 0 8px 24px rgba(0,0,0,.3); }
.feedback svg { width: 36px; height: 36px; }
.nextjs { position: absolute; left: 40px; top: 1688px; display: grid; place-items: center; width: 72px; height: 72px; border-radius: 50%; background: #050505; border: 2px solid #2a2a2a; box-shadow: 0 4px 16px rgba(0,0,0,.4); }

/* modal */
.modal { position: absolute; left: 928px; top: 368px; width: 1024px; height: 1356px; padding: 48px; border: 2px solid #2b3341; border-radius: 16px; background: linear-gradient(180deg, #101628, #1e293b); color: #f4f6f9; box-shadow: 0 20px 60px rgba(0,0,0,.4); }
.modal-x { position: absolute; right: 32px; top: 31px; width: 32px; height: 32px; color: #b9bcc1; }
.modal h2 { width: max-content; font-size: 47px; font-weight: 700; line-height: 64px; letter-spacing: -.63px; background: linear-gradient(90deg, #2563eb, #3376f8); background-clip: text; color: transparent; }
.desc { margin-top: 16px; font-size: 27px; line-height: 40px; letter-spacing: .11px; color: #8b9097; white-space: nowrap; }
.prog-row { display: flex; justify-content: space-between; margin-top: 48px; font-size: 27px; font-weight: 500; line-height: 40px; letter-spacing: .5px; color: #8b9097; }
.pct { color: #60a5fa; }
.prog { height: 16px; margin: 31px 0 32px; border-radius: 8px; overflow: hidden; background: #344056; }
.prog i { display: block; height: 16px; background: #2d68b5; }
.steps { display: flex; gap: 16px; height: 149px; overflow: hidden; }
.step { flex: none; display: flex; flex-direction: column; align-items: center; width: 208px; height: 137px; padding-top: 24px; border: 2px solid #334155; border-radius: 16px; background: #1f283a; font-size: 20px; font-weight: 500; line-height: 26px; letter-spacing: .3px; white-space: nowrap; }
.step i { display: grid; place-items: center; width: 48px; height: 48px; margin-bottom: 16px; border: 4px solid #f4f6f9; border-radius: 50%; font-size: 23.500px; letter-spacing: 0; }
.step.cur { width: 212px; border: 4px solid #3b82f6; background: #192554; box-shadow: 0 0 0 4px #131b2d, 0 0 0 8px #2d68b5; }
.step.cur i { border: 0; background: #3b82f6; font-weight: 600; }
.step.off { opacity: .48; }
.step.s3 { width: 250px; }
.step.s4 { width: 245px; }
.scroll { height: 603px; padding: 135px 64px 0; overflow: hidden; }
.sec { display: flex; gap: 24px; height: 135px; border-bottom: 2px solid #283241; }
.sec svg { margin-top: 5px; }
.sec h3 { font-size: 39px; font-weight: 600; line-height: 52px; letter-spacing: -.5px; }
.sec p { margin: 10px 0 0; font-size: 27px; line-height: 40px; letter-spacing: .15px; color: #7f868f; }
.lookup { height: 400px; margin-top: 64px; padding: 48px; border: 2px solid #1d45b5; border-radius: 16px; background: #1a233c; }
.lookup h4 { display: flex; align-items: center; gap: 16px; height: 48px; font-size: 31px; font-weight: 500; color: #dbe8fb; white-space: nowrap; }
.lookup h4 svg { color: #60a5fa; }
.find { display: flex; gap: 16px; margin-top: 32px; }
.input { width: 472px; height: 72px; padding: 0 24px; border: 2px solid #27313e; border-radius: 12px; background: #1f293a; font-size: 27px; line-height: 71px; color: #858b93; }
.input span { display: block; overflow: hidden; white-space: nowrap; height: 68px; }
.btn-search { display: flex; align-items: center; gap: 32px; width: 208px; height: 72px; padding-left: 24px; border: 2px solid #1d4ed8; border-radius: 12px; background: #1f293a; font-size: 27px; font-weight: 500; letter-spacing: .3px; }
.lookup p { margin-top: 25px; font-size: 27px; line-height: 40px; letter-spacing: .16px; color: #93c5fd; white-space: nowrap; }
.foot { display: flex; align-items: center; width: 924px; height: 185px; margin-top: 32px; padding-left: 48px; border-top: 2px solid #262d39; background: #101629; font-size: 27px; font-weight: 500; letter-spacing: .4px; }
.foot a { flex: none; display: flex; align-items: center; height: 72px; border: 2px solid #2b3240; border-radius: 12px; background: #191f2d; }
.foot .prev { width: 240px; padding-left: 29px; gap: 32px; border-color: #1d2432; background: #131929; color: #777c86; }
.warn { display: flex; align-items: center; gap: 16px; width: 173px; color: #fbbf24; font-weight: 400; line-height: 40px; letter-spacing: .2px; }
.warn svg { width: 15px; height: 15px; }
.warn span { width: 128px; }
.foot .cancel { width: 200px; justify-content: center; margin-right: 24px; }
.foot .next { width: 200px; padding-left: 36px; gap: 30px; border-color: #1b3f91; background: #1b3f91; color: #8b96ad; }
```
